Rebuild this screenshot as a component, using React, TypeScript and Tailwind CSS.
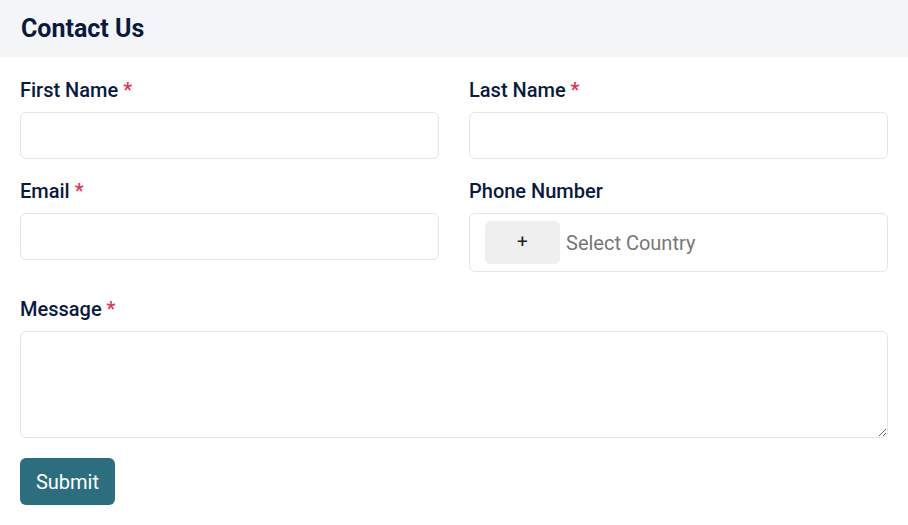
export default function App() {
  const label = 'block text-[20px] leading-[26px] font-medium text-[#091a3f] mb-[9px]';
  const input =
    'block w-full h-[47px] rounded-[6px] border border-[#e1e5ef] bg-white px-3 text-[18px] outline-none';

  return (
    <div className="min-h-screen bg-white" style={{ fontFamily: 'Roboto, "Liberation Sans", sans-serif' }}>
      <header className="h-[57px] bg-[#f4f5f7] flex items-center px-[21px]">
        <h1 className="text-[25px] font-bold text-[#091a3f]">Contact Us</h1>
      </header>

      <form className="px-[20px] pt-[20px]" onSubmit={(e) => e.preventDefault()}>
        <div className="grid grid-cols-2 gap-x-[30px] gap-y-[19px]">
          <div>
            <label className={label}>
              First Name <span className="text-[#e0344e]">*</span>
            </label>
            <input className={input} />
          </div>
          <div>
            <label className={label}>
              Last Name <span className="text-[#e0344e]">*</span>
            </label>
            <input className={input} />
          </div>
          <div>
            <label className={label}>
              Email <span className="text-[#e0344e]">*</span>
            </label>
            <input className={input} />
          </div>
          <div>
            <label className={label}>Phone Number</label>
            <div className="h-[59px] rounded-[6px] border border-[#e1e5ef] bg-white flex items-center pl-[15px] gap-[6px]">
              <div className="w-[75px] h-[43px] rounded-[6px] bg-[#efefef] flex items-center justify-center text-[19px] text-[#222]">
                +
              </div>
              <span className="text-[20px] text-[#777]">Select Country</span>
            </div>
          </div>
        </div>

        <div className="mt-[24px]">
          <label className={label}>
            Message <span className="text-[#e0344e]">*</span>
          </label>
          <textarea className="block w-full h-[107px] rounded-[6px] border border-[#e1e5ef] bg-white p-3 outline-none" />
        </div>

        <button
          type="submit"
          className="mt-[20px] h-[47px] w-[95px] rounded-[6px] bg-[#2c6e7d] text-white text-[20px]"
        >
          Submit
        </button>
      </form>
    </div>
  );
}
